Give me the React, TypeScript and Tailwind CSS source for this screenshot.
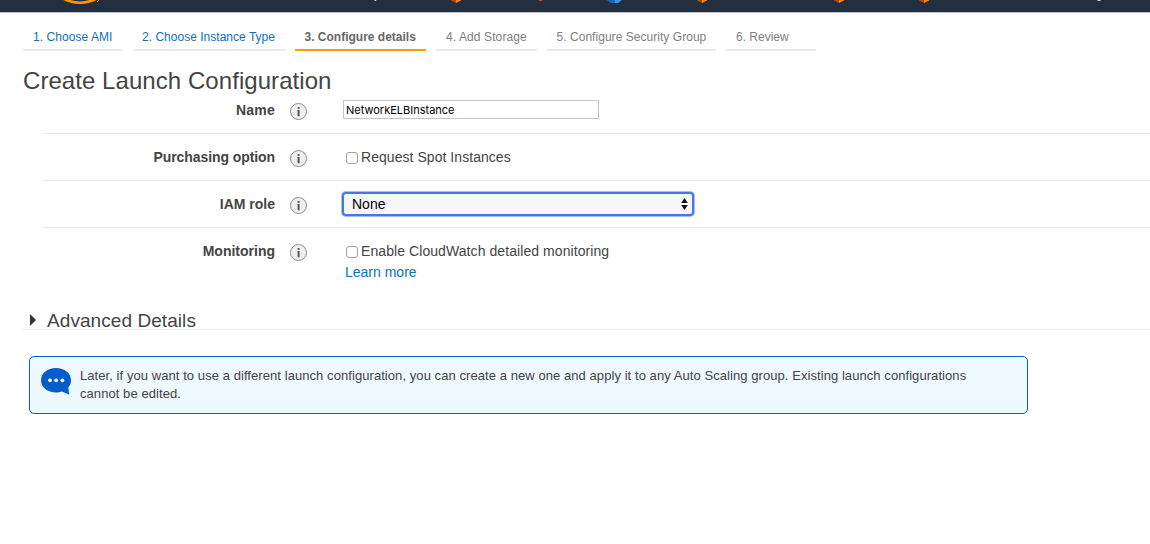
import type { ReactNode } from "react";

const tabs = [
  { label: "1. Choose AMI", width: "w-[100px]", look: "border-[#eaeaea] pl-[10px] tracking-[0.06px] text-[#1170b8]" },
  { label: "2. Choose Instance Type", width: "w-[152px]", look: "border-[#eaeaea] pl-[9px] tracking-[0.02px] text-[#1170b8]" },
  { label: "3. Configure details", width: "w-[131px]", look: "border-[#ff9900] pl-[9.500px] font-bold text-[#666666]" },
  { label: "4. Add Storage", width: "w-[101px]", look: "border-[#eaeaea] pl-[10px] tracking-[0.1px] text-[#808080]" },
  { label: "5. Configure Security Group", width: "w-[169px]", look: "border-[#eaeaea] pl-[9.500px] tracking-[0.04px] text-[#808080]" },
  { label: "6. Review", width: "w-[90px]", look: "border-[#eaeaea] pl-[10px] text-[#808080]" },
];

function InfoIcon() {
  return (
    <svg className="mt-[15px] ml-[14px] h-[19px] w-[19px] shrink-0" viewBox="0 0 19 19">
      <circle cx="9.5" cy="9.5" r="8" fill="#efefef" stroke="#8c8c8c" strokeWidth="1" />
      <rect x="8.6" y="5" width="2" height="1.8" fill="#555" />
      <path d="M8.200 7.900h2.400v6.300h-2V8.600h-.4z" fill="#555" />
    </svg>
  );
}

function Row({ label, spacing, last, children }: { label: string; spacing?: string; last?: boolean; children: ReactNode }) {
  return (
    <div className={last ? "flex h-[64px]" : "flex h-[47px] border-b border-[#eaeaea]"}>
      <div className={`w-[232px] shrink-0 pt-[13px] text-right text-[14px] leading-5 font-bold ${spacing ?? ""}`}>{label}</div>
      <InfoIcon />
      <div className="ml-[35px]">{children}</div>
    </div>
  );
}

function Check({ label, text }: { label: string; text: string }) {
  return (
    <label className="flex pt-[13px] pl-[3px] leading-5">
      <input
        type="checkbox"
        className="mt-[5px] mr-[3px] h-3 w-3 shrink-0 appearance-none rounded-[3px] border border-[#a0a0a0] bg-white"
      />
      <span className={text}>{label}</span>
    </label>
  );
}

function HeaderMarks() {
  return (
    <svg className="block h-3 w-full" viewBox="0 0 1150 12">
      <path d="M62 -2Q80 7.5 98 -2" fill="none" stroke="#ff9900" strokeWidth="2.6" />
      <path d="M99 -1Q98.5 1 97 2" fill="none" stroke="#ff9900" strokeWidth="1" />
      <path d="M374.500 0h2l-.5 1h-1.500z" fill="#ccc" />
      {[456, 702, 839, 924].map((x) => (
        <g key={x} transform={`translate(${x} 0)`}>
          <path d="M-5 0H0V3L-5 .5z" fill="#ad4a0c" />
          <path d="M0 0H5V.5L0 3z" fill="#ff8405" />
        </g>
      ))}
      <path d="M538 0h5l-2.500 1.500z" fill="#e83b22" />
      <path d="M606.500 0H615V3H611z" fill="#1769bf" />
      <path d="M615 0H622L618 3H615z" fill="#4393df" />
      <path d="M1097 0h4l-1 1h-2z" fill="#ddd" />
    </svg>
  );
}

export default function App() {
  return (
    <div className="h-[544px] w-full overflow-hidden bg-white font-['Liberation_Sans',Arial,sans-serif] text-[#444444]">
      <header className="h-[13px] border-b border-[#c0c3c5] bg-[#232f3e]">
        <HeaderMarks />
      </header>

      <nav className="flex gap-[10px] pt-[14px] pl-[23px]">
        {tabs.map((t) => (
          <div
            key={t.label}
            className={`${t.width} ${t.look} h-6 shrink-0 border-b-2 text-[12px] leading-5 whitespace-nowrap`}
          >
            {t.label}
          </div>
        ))}
      </nav>

      <h1 className="mt-[14px] ml-[23px] h-[22px] text-[24px] leading-[32px] tracking-[0.06px]">Create Launch Configuration</h1>

      <main className="ml-[43px]">
        <Row label="Name" spacing="tracking-[0.2px]">
          <input
            defaultValue="NetworkELBInstance"
            className="mt-[13px] block h-[19px] w-[256px] border border-[#c4c4c4] bg-white px-[2px] font-['Inter',sans-serif] text-[11px] text-black outline-none"
          />
        </Row>
        <Row label="Purchasing option" spacing="tracking-[-0.08px]">
          <Check label="Request Spot Instances" text="text-[14px] tracking-[0.05px]" />
        </Row>
        <Row label="IAM role">
          <button className="mt-[13px] ml-px flex h-[20px] w-[348px] items-center justify-between rounded-[2px] bg-[#f7f7f7] pr-[4px] pl-[8px] text-[14px] text-black shadow-[0_0_0_2px_#4378e8,0_0_0_3px_#a3bff9]">
            <span>None</span>
            <svg className="h-3 w-[7px]" viewBox="0 0 7 12">
              <path d="M3.500 0 6.800 5H.2zM3.500 12 .2 7h6.600z" fill="#111" />
            </svg>
          </button>
        </Row>
        <Row label="Monitoring" last>
          <Check label="Enable CloudWatch detailed monitoring" text="text-[14px] tracking-[0.075px]" />
          <a className="ml-[2px] block pt-px text-[14px] leading-5 text-[#0d72b9]">Learn more</a>
        </Row>
      </main>

      <section className="mt-[14px] ml-[23px] flex h-[24px] border-b border-[#eaeaea]">
        <svg className="mt-[8px] ml-[7px] h-3 w-[7px]" viewBox="0 0 7 12">
          <path d="M0 0 6 6 0 12z" fill="#333" />
        </svg>
        <h2 className="ml-[10px] text-[19px] leading-[30px] tracking-[0.07px]">Advanced Details</h2>
      </section>

      <aside className="mt-[26px] ml-[29px] flex h-[58px] w-[999px] rounded-[5px] border border-[#0d62b5] bg-[#edf8ff]">
        <svg className="mt-[11px] ml-[11px] h-[28px] w-[30px] shrink-0" viewBox="0 0 30 28">
          <path d="M15 0C23.300 0 30 5.200 30 12.200c0 3-1 5.400-2.700 7.400l1 7.200-7.300-3.300C19 24.100 17 24.400 15 24.400 6.700 24.400 0 19.200 0 12.200S6.700 0 15 0z" fill="#045dc9" />
          <g fill="#fff">
            <circle cx="9" cy="12.300" r="1.900" />
            <circle cx="15.200" cy="12.300" r="1.900" />
            <circle cx="21.400" cy="12.300" r="1.900" />
          </g>
        </svg>
        <p className="mt-[10px] ml-[9px] text-[13px] leading-[18px] tracking-[0.068px] whitespace-nowrap">
          Later, if you want to use a different launch configuration, you can create a new one and apply it to any Auto Scaling group. Existing launch configurations
          <br />
          cannot be edited.
        </p>
      </aside>
    </div>
  );
}
